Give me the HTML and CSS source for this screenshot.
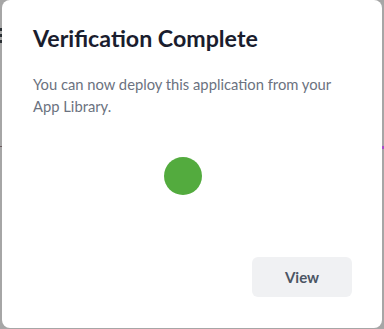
FILE: index.html
```html
<!DOCTYPE html>
<html>
<head>
<meta charset="utf-8">
<link rel="stylesheet" href="styles.css">
</head>
<body>
<div class="backdrop">
  <div class="bg-icon"></div>
  <div class="bg-line"></div>
  <div class="bg-purple"></div>
</div>
<div class="modal">
  <h1 class="title">Verification Complete</h1>
  <p class="desc">You can now deploy this application from your App Library.</p>
  <div class="status"><span class="dot"></span></div>
  <div class="actions"><button class="btn">View</button></div>
</div>
</body>
</html>
```
FILE: styles.css
```css
html, body {
  margin: 0;
  padding: 0;
}
body {
  width: 384px;
  height: 329px;
  background: #a6a6a6;
  font-family: Lato, "Noto Sans", sans-serif;
  position: relative;
  overflow: hidden;
}
.backdrop {
  position: absolute;
  inset: 0;
}
.bg-icon {
  position: absolute;
  left: 0;
  top: 28px;
  width: 2px;
  height: 16px;
  background: linear-gradient(#2b3035 0 3px, transparent 3px 6px, #2b3035 6px 9px, transparent 9px 12px, #2b3035 12px 15px, transparent 15px);
}
.bg-line {
  position: absolute;
  left: 0;
  top: 146px;
  width: 2px;
  height: 1px;
  background: #6b5a5f;
}
.bg-purple {
  position: absolute;
  right: 0;
  top: 146px;
  width: 2px;
  height: 3px;
  background: #a64ec8;
}
.modal {
  position: relative;
  margin-left: 2px;
  width: 380px;
  height: 328px;
  box-sizing: border-box;
  background: #ffffff;
  border-radius: 8px;
  padding: 24px 30px 31px 31px;
  display: flex;
  flex-direction: column;
}
.title {
  margin: 0;
  font-size: 23.2px;
  line-height: 28px;
  font-weight: 700;
  color: #1a1d2e;
}
.desc {
  margin: 21px 0 0;
  font-size: 14.75px;
  line-height: 22px;
  color: #6b7280;
}
.status {
  margin-top: 40px;
  padding-left: 131px;
  display: flex;
}
.dot {
  width: 38px;
  height: 38px;
  border-radius: 50%;
  background: #53ab3e;
}
.actions {
  margin-top: auto;
  display: flex;
  justify-content: flex-end;
}
.btn {
  width: 100px;
  height: 40px;
  border: none;
  border-radius: 6px;
  background: #f0f1f3;
  font-family: Lato, "Noto Sans", sans-serif;
  font-size: 15px;
  font-weight: 700;
  color: #4b5563;
  padding: 0;
}
```
